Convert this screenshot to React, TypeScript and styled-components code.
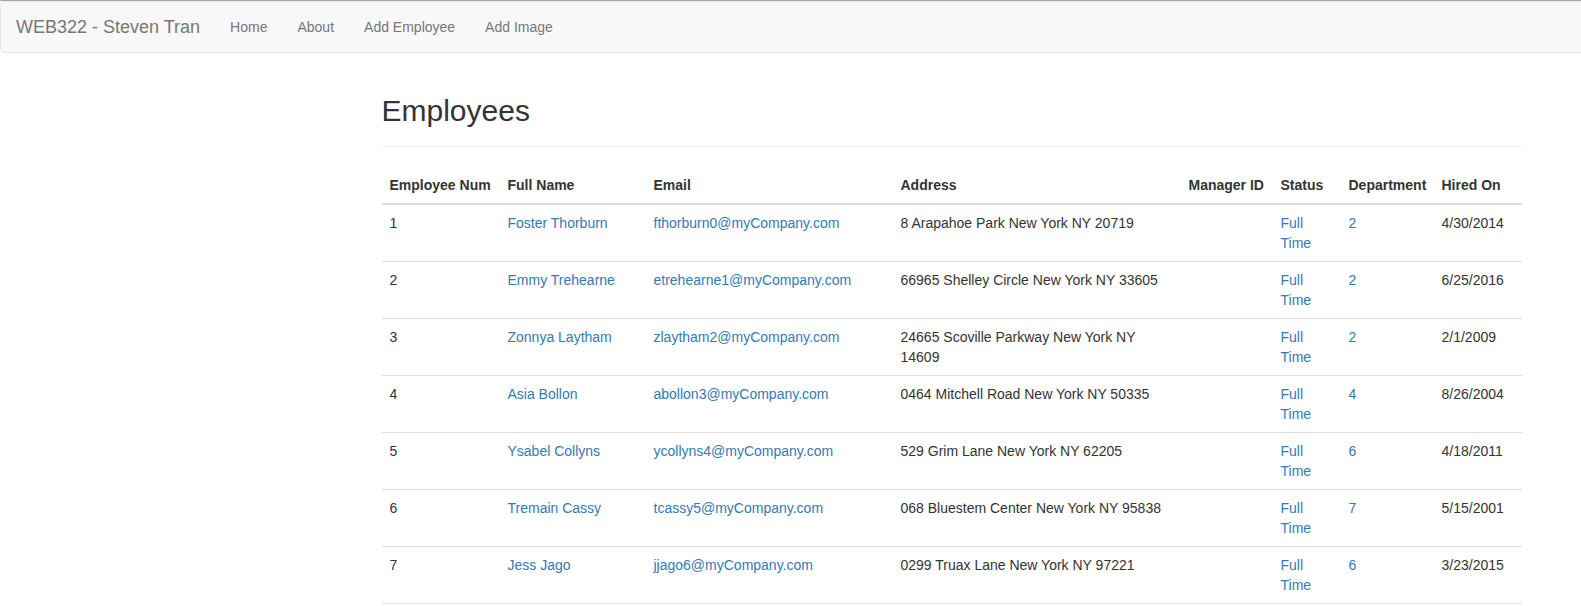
import React from "react";
import styled, { createGlobalStyle } from "styled-components";

const GlobalStyle = createGlobalStyle`
  *, *::before, *::after { box-sizing: border-box; }
  html, body { margin: 0; padding: 0; overflow: hidden; background: #fff; }
  body {
    font-family: "Liberation Sans", Arial, Helvetica, sans-serif;
    font-size: 14px;
    line-height: 1.42857143;
    color: #333;
  }
`;

const Page = styled.div`
  width: 1903px;
  border-top: 1px solid #a9a9a9;
`;

const Navbar = styled.nav`
  min-height: 50px;
  margin-bottom: 20px;
  background: #f8f8f8;
  border: 1px solid #e7e7e7;
  border-radius: 4px;
  display: flex;
  align-items: stretch;
`;

const Brand = styled.a`
  display: block;
  height: 50px;
  padding: 15px;
  font-size: 18px;
  line-height: 20px;
  color: #777;
  text-decoration: none;
`;

const NavList = styled.ul`
  display: flex;
  list-style: none;
  margin: 0;
  padding: 0;
`;

const NavLink = styled.a`
  display: block;
  padding: 15px;
  line-height: 20px;
  color: #777;
  text-decoration: none;
`;

const Container = styled.main`
  width: 1170px;
  margin: 0 auto;
  padding: 0 15px;
`;

const PageHeader = styled.div`
  padding-bottom: 9px;
  margin: 41px 0 20px;
  border-bottom: 1px solid #eee;
`;

const Title = styled.h2`
  margin: 0 0 10px;
  font-size: 30px;
  font-weight: 500;
  line-height: 1.1;
  color: inherit;
`;

const Table = styled.table`
  width: 100%;
  max-width: 100%;
  margin-bottom: 20px;
  border-collapse: collapse;
  border-spacing: 0;
  table-layout: fixed;
`;

const Col = styled.col<{ $w: number }>`
  width: ${(p) => p.$w}px;
`;

const Th = styled.th`
  padding: 8px;
  text-align: left;
  font-weight: bold;
  vertical-align: bottom;
  line-height: 1.42857143;
  border-bottom: 2px solid #ddd;
`;

const Row = styled.tr`
  &:last-child td {
    border-bottom: 1px solid #ddd;
  }
`;

const Td = styled.td`
  padding: 8px;
  vertical-align: top;
  line-height: 1.42857143;
  border-top: 1px solid #ddd;
`;

const Link = styled.a`
  color: #337ab7;
  text-decoration: none;
`;

const colWidths = [118, 146, 247, 288, 92, 68, 93, 88];

const employees = [
  { num: 1, name: "Foster Thorburn", email: "fthorburn0@myCompany.com", address: "8 Arapahoe Park New York NY 20719", dept: 2, hired: "4/30/2014" },
  { num: 2, name: "Emmy Trehearne", email: "etrehearne1@myCompany.com", address: "66965 Shelley Circle New York NY 33605", dept: 2, hired: "6/25/2016" },
  { num: 3, name: "Zonnya Laytham", email: "zlaytham2@myCompany.com", address: "24665 Scoville Parkway New York NY 14609", dept: 2, hired: "2/1/2009" },
  { num: 4, name: "Asia Bollon", email: "abollon3@myCompany.com", address: "0464 Mitchell Road New York NY 50335", dept: 4, hired: "8/26/2004" },
  { num: 5, name: "Ysabel Collyns", email: "ycollyns4@myCompany.com", address: "529 Grim Lane New York NY 62205", dept: 6, hired: "4/18/2011" },
  { num: 6, name: "Tremain Cassy", email: "tcassy5@myCompany.com", address: "068 Bluestem Center New York NY 95838", dept: 7, hired: "5/15/2001" },
  { num: 7, name: "Jess Jago", email: "jjago6@myCompany.com", address: "0299 Truax Lane New York NY 97221", dept: 6, hired: "3/23/2015" },
];

export default function App() {
  return (
    <>
      <GlobalStyle />
      <Page>
        <Navbar>
          <Brand href="#">WEB322 - Steven Tran</Brand>
          <NavList>
            <li><NavLink href="#">Home</NavLink></li>
            <li><NavLink href="#">About</NavLink></li>
            <li><NavLink href="#">Add Employee</NavLink></li>
            <li><NavLink href="#">Add Image</NavLink></li>
          </NavList>
        </Navbar>
        <Container>
          <PageHeader>
            <Title>Employees</Title>
          </PageHeader>
          <Table>
            <colgroup>
              {colWidths.map((w, i) => (
                <Col key={i} $w={w} />
              ))}
            </colgroup>
            <thead>
              <tr>
                <Th>Employee Num</Th>
                <Th>Full Name</Th>
                <Th>Email</Th>
                <Th>Address</Th>
                <Th>Manager ID</Th>
                <Th>Status</Th>
                <Th>Department</Th>
                <Th>Hired On</Th>
              </tr>
            </thead>
            <tbody>
              {employees.map((e) => (
                <Row key={e.num}>
                  <Td>{e.num}</Td>
                  <Td><Link href="#">{e.name}</Link></Td>
                  <Td><Link href="#">{e.email}</Link></Td>
                  <Td>{e.address}</Td>
                  <Td></Td>
                  <Td><Link href="#">Full Time</Link></Td>
                  <Td><Link href="#">{e.dept}</Link></Td>
                  <Td>{e.hired}</Td>
                </Row>
              ))}
            </tbody>
          </Table>
        </Container>
      </Page>
    </>
  );
}
